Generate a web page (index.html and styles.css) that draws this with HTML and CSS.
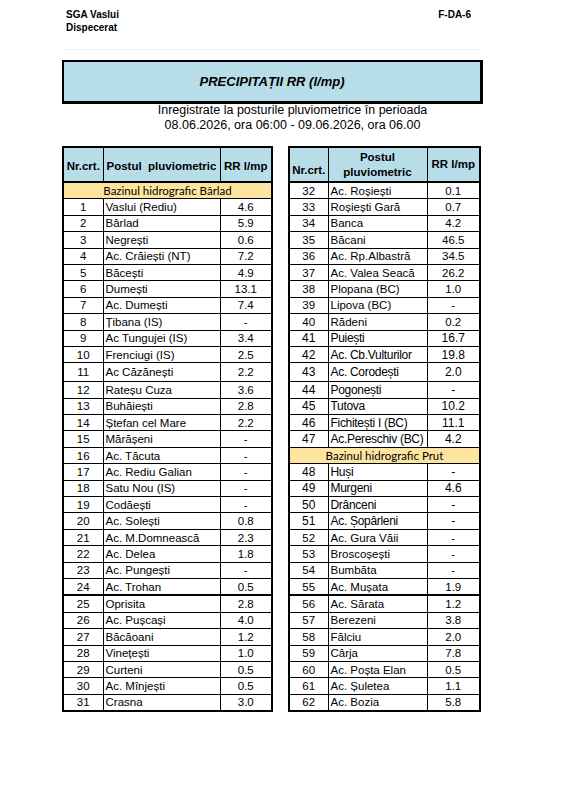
FILE: index.html
```html
<!DOCTYPE html>
<html lang="ro">
<head>
  <meta charset="UTF-8">
  <title>Precipitații RR</title>
  <link rel="stylesheet" href="styles.css">
</head>
<body>
  <div class="sheet">
    <div class="doc-head">
      <div>SGA Vaslui<br>Dispecerat</div>
      <div>F-DA-6</div>
    </div>

    <div class="title-box">PRECIPITAȚII RR (l/mp)</div>

    <div class="period">
      Inregistrate la posturile pluviometrice în perioada<br>
      08.06.2026, ora 06:00 - 09.06.2026, ora 06.00
    </div>

    <div class="tables">
      <table class="rr-table left">
        <colgroup><col class="c-nr"><col class="c-name"><col class="c-val"></colgroup>
        <tr class="head">
          <th class="h-low">Nr.crt.</th>
          <th class="h-low">Postul&nbsp; pluviometric</th>
          <th class="h-low">RR l/mp</th>
        </tr>
        <tr class="basin"><td colspan="3">Bazinul hidrografic Bârlad</td></tr>
        <tr><td>1</td><td>Vaslui (Rediu)</td><td>4.6</td></tr>
        <tr><td>2</td><td>Bârlad</td><td>5.9</td></tr>
        <tr><td>3</td><td>Negrești</td><td>0.6</td></tr>
        <tr><td>4</td><td>Ac. Crăiești (NT)</td><td>7.2</td></tr>
        <tr><td>5</td><td>Băcești</td><td>4.9</td></tr>
        <tr><td>6</td><td>Dumești</td><td>13.1</td></tr>
        <tr><td>7</td><td>Ac. Dumești</td><td>7.4</td></tr>
        <tr><td>8</td><td>Țibana (IS)</td><td>-</td></tr>
        <tr><td>9</td><td>Ac Tungujei (IS)</td><td>3.4</td></tr>
        <tr><td>10</td><td>Frenciugi (IS)</td><td>2.5</td></tr>
        <tr class="tall"><td>11</td><td>Ac Căzănești</td><td>2.2</td></tr>
        <tr><td>12</td><td>Rateșu Cuza</td><td>3.6</td></tr>
        <tr><td>13</td><td>Buhăiești</td><td>2.8</td></tr>
        <tr><td>14</td><td>Ștefan cel Mare</td><td>2.2</td></tr>
        <tr><td>15</td><td>Mărășeni</td><td>-</td></tr>
        <tr><td>16</td><td>Ac. Tăcuta</td><td>-</td></tr>
        <tr><td>17</td><td>Ac. Rediu Galian</td><td>-</td></tr>
        <tr><td>18</td><td>Satu Nou (IS)</td><td>-</td></tr>
        <tr><td>19</td><td>Codăești</td><td>-</td></tr>
        <tr><td>20</td><td>Ac. Solești</td><td>0.8</td></tr>
        <tr><td>21</td><td>Ac. M.Domnească</td><td>2.3</td></tr>
        <tr><td>22</td><td>Ac. Delea</td><td>1.8</td></tr>
        <tr><td>23</td><td>Ac. Pungești</td><td>-</td></tr>
        <tr class="split"><td>24</td><td>Ac. Trohan</td><td>0.5</td></tr>
        <tr><td>25</td><td>Oprisita</td><td>2.8</td></tr>
        <tr><td>26</td><td>Ac. Pușcași</td><td>4.0</td></tr>
        <tr><td>27</td><td>Băcăoani</td><td>1.2</td></tr>
        <tr><td>28</td><td>Vinețești</td><td>1.0</td></tr>
        <tr><td>29</td><td>Curteni</td><td>0.5</td></tr>
        <tr><td>30</td><td>Ac. Mînjești</td><td>0.5</td></tr>
        <tr><td>31</td><td>Crasna</td><td>3.0</td></tr>
      </table>

      <table class="rr-table right">
        <colgroup><col class="c-nr"><col class="c-name"><col class="c-val"></colgroup>
        <tr class="head">
          <th class="h-bottom">Nr.crt.</th>
          <th>Postul<br>pluviometric</th>
          <th>RR l/mp</th>
        </tr>
        <tr><td>32</td><td>Ac. Roșiești</td><td>0.1</td></tr>
        <tr><td>33</td><td>Roșiești Gară</td><td>0.7</td></tr>
        <tr><td>34</td><td>Banca</td><td>4.2</td></tr>
        <tr><td>35</td><td>Băcani</td><td>46.5</td></tr>
        <tr><td>36</td><td>Ac. Rp.Albastră</td><td>34.5</td></tr>
        <tr><td>37</td><td>Ac. Valea Seacă</td><td>26.2</td></tr>
        <tr><td>38</td><td>Plopana (BC)</td><td>1.0</td></tr>
        <tr><td>39</td><td>Lipova (BC)</td><td>-</td></tr>
        <tr><td>40</td><td>Rădeni</td><td>0.2</td></tr>
        <tr class="big"><td>41</td><td>Puiești</td><td>16.7</td></tr>
        <tr class="big"><td>42</td><td>Ac. Cb.Vulturilor</td><td>19.8</td></tr>
        <tr class="big tall"><td>43</td><td>Ac. Corodești</td><td>2.0</td></tr>
        <tr class="big"><td>44</td><td>Pogonești</td><td>-</td></tr>
        <tr class="big"><td>45</td><td>Tutova</td><td>10.2</td></tr>
        <tr class="big"><td>46</td><td>Fichitești I (BC)</td><td>11.1</td></tr>
        <tr class="big"><td>47</td><td>Ac.Pereschiv (BC)</td><td>4.2</td></tr>
        <tr class="basin"><td colspan="3">Bazinul hidrografic Prut</td></tr>
        <tr class="big"><td>48</td><td>Huși</td><td>-</td></tr>
        <tr class="big"><td>49</td><td>Murgeni</td><td>4.6</td></tr>
        <tr class="big"><td>50</td><td>Drânceni</td><td>-</td></tr>
        <tr class="big"><td>51</td><td>Ac. Șopârleni</td><td>-</td></tr>
        <tr><td>52</td><td>Ac. Gura Văii</td><td>-</td></tr>
        <tr><td>53</td><td>Broscoșești</td><td>-</td></tr>
        <tr><td>54</td><td>Bumbăta</td><td>-</td></tr>
        <tr class="split"><td>55</td><td>Ac. Mușata</td><td>1.9</td></tr>
        <tr><td>56</td><td>Ac. Sărata</td><td>1.2</td></tr>
        <tr><td>57</td><td>Berezeni</td><td>3.8</td></tr>
        <tr><td>58</td><td>Fălciu</td><td>2.0</td></tr>
        <tr><td>59</td><td>Cârja</td><td>7.8</td></tr>
        <tr><td>60</td><td>Ac. Poșta Elan</td><td>0.5</td></tr>
        <tr><td>61</td><td>Ac. Șuletea</td><td>1.1</td></tr>
        <tr><td>62</td><td>Ac. Bozia</td><td>5.8</td></tr>
      </table>
    </div>
  </div>
</body>
</html>
```

FILE: styles.css
```css
body {
  margin: 0;
  background: #fff;
  color: #000;
  font-family: "Liberation Sans", Arial, sans-serif;
}

.sheet {
  width: 421px;
  padding: 8px 0 0 62px;
}

/* top header lines */
.doc-head {
  display: flex;
  justify-content: space-between;
  padding: 0 12px 0 4px;
  font-size: 10px;
  font-weight: bold;
  line-height: 13px;
  height: 41px;
  border-bottom: 1px solid #f0f0f0;
}

.title-box {
  margin-top: 10px;
  height: 39px;
  border: 2px solid #000;
  border-width: 2px 3px 3px 2px;
  background: #b7dde8;
  font-size: 13px;
  font-weight: bold;
  font-style: italic;
  display: flex;
  align-items: center;
  justify-content: center;
}

.period {
  margin: -1px 0 0 40px;
  text-align: center;
  font-size: 12.5px;
  line-height: 15px;
  height: 43px;
}

.tables {
  display: flex;
  gap: 15px;
  align-items: flex-start;
}

.rr-table {
  border-collapse: collapse;
  table-layout: fixed;
  border: 2px solid #000;
  font-size: 11.5px;
}
.rr-table.left { width: 211px; }
.rr-table.right { width: 193px; }

.left .c-nr { width: 40px; }
.left .c-val { width: 52px; }
.right .c-nr { width: 39px; }
.right .c-val { width: 53px; }

.rr-table th,
.rr-table td {
  border: 1px solid #000;
  padding: 0;
  white-space: nowrap;
  overflow: hidden;
}

.rr-table td {
  height: 15.4px;
  line-height: 14px;
  text-align: center;
}
.rr-table td:nth-child(2) {
  text-align: left;
  padding-left: 2px;
}

.rr-table tr.tall td { height: 18px; }
.rr-table tr.big td { font-size: 12px; }
.rr-table tr.big td:nth-child(2) { letter-spacing: -0.3px; }
.rr-table tr.split td { border-bottom-width: 2px; }

.head th {
  height: 33px;
  background: #b7dde8;
  font-weight: bold;
  font-size: 11.5px;
  line-height: 15px;
  border-bottom-width: 2px;
  vertical-align: middle;
}
.head th.h-low {
  height: 26px;
  vertical-align: bottom;
  padding-bottom: 7px;
}
.head th.h-bottom {
  height: 30px;
  vertical-align: bottom;
  padding-bottom: 3px;
}

.rr-table tr.basin td {
  background: #fde5a0;
  text-align: center;
  padding-left: 0;
  font-family: Lato, "Noto Sans", sans-serif;
  font-size: 11.5px;
  line-height: 13px;
  border-left: 0;
  border-right: 0;
}
```
